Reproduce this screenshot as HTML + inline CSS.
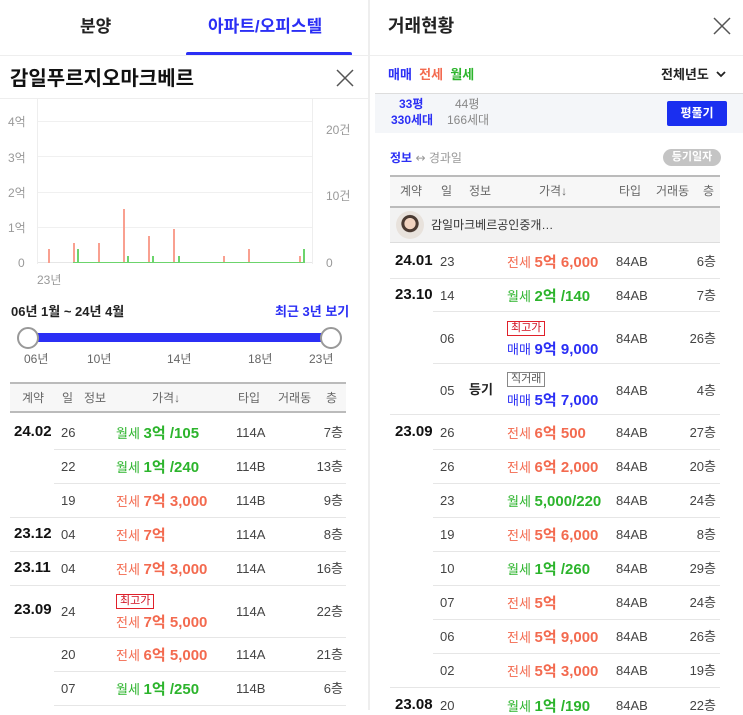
<!DOCTYPE html>
<html><head><meta charset="utf-8"><style>
*{margin:0;padding:0;box-sizing:border-box}
body{width:743px;height:710px;overflow:hidden;background:#fff;font-family:"Liberation Sans","Noto Sans CJK KR",sans-serif;color:#222;position:relative}
.a{position:absolute;white-space:nowrap;line-height:17px}
.a:has(> .v){margin-top:2px}
.ln{position:absolute;height:1px;background:#e6e6e6}
.b{color:#2b2ff5}.r{color:#f36a4f}.g{color:#2cb42c}
.m{font-weight:bold;font-size:15px;color:#111}
.d{font-size:13px;color:#444}
.k{font-size:13px}
.v{font-size:15px;font-weight:bold}
.t{font-size:13px;color:#444}
.f{font-size:13px;color:#444;text-align:right}
.tag{font-size:11px;border:1px solid #e0202a;color:#d01020;padding:0 3px;line-height:13px}
.tg{font-size:11px;border:1px solid #888;color:#555;padding:0 3px;line-height:13px}
.h{font-size:12px;color:#666}
</style></head><body>
<!-- Left panel -->
<div class="a" style="left:80px;top:18px;font-size:17px;font-weight:bold">분양</div>
<div class="a b" style="left:208px;top:18px;font-size:17px;font-weight:bold">아파트/오피스텔</div>
<div class="a" style="left:186px;top:52px;width:166px;height:4px;background:#2b2ff5;border-radius:2px"></div>
<div class="ln" style="left:0;top:55px;width:370px;background:#eee"></div>
<div class="a" style="left:10px;top:71px;font-size:20px;font-weight:bold;color:#111">감일푸르지오마크베르</div>
<svg class="a" style="left:335px;top:68px" width="20" height="20"><path d="M2 2L18 18M18 2L2 18" stroke="#555" stroke-width="1.5"/></svg>
<div class="ln" style="left:0;top:98px;width:370px;background:#eee"></div>
<!-- chart -->
<div class="a" style="left:37px;top:99px;width:1px;height:165px;background:#eee"></div>
<div class="a" style="left:312px;top:99px;width:1px;height:165px;background:#eee"></div>
<div class="ln" style="left:38px;top:121px;width:274px;background:#f0f0f0"></div>
<div class="ln" style="left:38px;top:156px;width:274px;background:#f0f0f0"></div>
<div class="ln" style="left:38px;top:192px;width:274px;background:#f0f0f0"></div>
<div class="ln" style="left:38px;top:227px;width:274px;background:#f0f0f0"></div>
<div class="ln" style="left:38px;top:262px;width:274px;background:#e6e6e6"></div>
<div class="a h" style="left:8px;top:114px;color:#999">4억</div>
<div class="a h" style="left:8px;top:150px;color:#999">3억</div>
<div class="a h" style="left:8px;top:185px;color:#999">2억</div>
<div class="a h" style="left:8px;top:220px;color:#999">1억</div>
<div class="a h" style="left:18px;top:255px;color:#999">0</div>
<div class="a h" style="left:326px;top:122px;color:#999">20건</div>
<div class="a h" style="left:326px;top:188px;color:#999">10건</div>
<div class="a h" style="left:326px;top:255px;color:#999">0</div>
<div class="a h" style="left:37px;top:272px;color:#999">23년</div>
<svg class="a" style="left:0;top:0" width="370" height="270">
<g fill="#f9a090">
<rect x="48" y="249" width="2" height="14"/><rect x="73" y="243" width="2" height="20"/><rect x="98" y="243" width="2" height="20"/><rect x="123" y="209" width="2" height="54"/><rect x="148" y="236" width="2" height="27"/><rect x="173" y="229" width="2" height="34"/><rect x="223" y="256" width="2" height="7"/><rect x="248" y="249" width="2" height="14"/><rect x="299" y="256" width="2" height="7"/></g>
<g fill="#6cd46c"><rect x="77" y="249" width="2" height="14"/><rect x="127" y="256" width="2" height="7"/><rect x="152" y="256" width="2" height="7"/><rect x="178" y="256" width="2" height="7"/><rect x="303" y="249" width="2" height="14"/><rect x="73" y="262" width="232" height="1"/></g>
</svg>
<div class="a" style="left:11px;top:303px;font-size:13px;font-weight:bold">06년 1월 ~ 24년 4월</div>
<div class="a b" style="left:275px;top:303px;font-size:13px;font-weight:bold">최근 3년 보기</div>
<div class="a" style="left:27px;top:333px;width:304px;height:9px;background:#2b2ff5"></div>
<div class="a" style="left:17px;top:327px;width:22px;height:22px;border-radius:50%;border:2px solid #999;background:#fff"></div>
<div class="a" style="left:320px;top:327px;width:22px;height:22px;border-radius:50%;border:2px solid #999;background:#fff"></div>
<div class="a h" style="left:24px;top:351px">06년</div><div class="a h" style="left:87px;top:351px">10년</div><div class="a h" style="left:167px;top:351px">14년</div><div class="a h" style="left:248px;top:351px">18년</div><div class="a h" style="left:309px;top:351px">23년</div>
<div class="a" style="left:10px;top:382px;width:336px;height:31px;background:#f7f7f7;border-top:2px solid #bbb;border-bottom:2px solid #bbb"></div>
<div class="a h" style="left:22px;top:390px">계약</div><div class="a h" style="left:62px;top:390px">일</div><div class="a h" style="left:84px;top:390px">정보</div><div class="a h" style="left:152px;top:390px">가격↓</div><div class="a h" style="left:238px;top:390px">타입</div><div class="a h" style="left:278px;top:390px">거래동</div><div class="a h" style="left:326px;top:390px">층</div>
<!-- left rows -->
<div class="a m" style="left:14px;top:423px">24.02</div><div class="a d" style="left:61px;top:424px">26</div><div class="a" style="left:116px;top:423px"><span class="k g">월세 </span><span class="v g">3억 /105</span></div><div class="a t" style="left:236px;top:424px">114A</div><div class="a f" style="left:300px;width:43px;top:424px">7층</div>
<div class="ln" style="left:54px;top:449px;width:292px"></div>
<div class="a d" style="left:61px;top:458px">22</div><div class="a" style="left:116px;top:457px"><span class="k g">월세 </span><span class="v g">1억 /240</span></div><div class="a t" style="left:236px;top:458px">114B</div><div class="a f" style="left:300px;width:43px;top:458px">13층</div>
<div class="ln" style="left:54px;top:483px;width:292px"></div>
<div class="a d" style="left:61px;top:492px">19</div><div class="a" style="left:116px;top:491px"><span class="k r">전세 </span><span class="v r">7억 3,000</span></div><div class="a t" style="left:236px;top:492px">114B</div><div class="a f" style="left:300px;width:43px;top:492px">9층</div>
<div class="ln" style="left:10px;top:517px;width:336px"></div>
<div class="a m" style="left:14px;top:525px">23.12</div><div class="a d" style="left:61px;top:526px">04</div><div class="a" style="left:116px;top:525px"><span class="k r">전세 </span><span class="v r">7억</span></div><div class="a t" style="left:236px;top:526px">114A</div><div class="a f" style="left:300px;width:43px;top:526px">8층</div>
<div class="ln" style="left:10px;top:551px;width:336px"></div>
<div class="a m" style="left:14px;top:559px">23.11</div><div class="a d" style="left:61px;top:560px">04</div><div class="a" style="left:116px;top:559px"><span class="k r">전세 </span><span class="v r">7억 3,000</span></div><div class="a t" style="left:236px;top:560px">114A</div><div class="a f" style="left:300px;width:43px;top:560px">16층</div>
<div class="ln" style="left:10px;top:585px;width:336px"></div>
<div class="a m" style="left:14px;top:601px">23.09</div><div class="a d" style="left:61px;top:603px">24</div><div class="a tag" style="left:116px;top:594px">최고가</div><div class="a" style="left:116px;top:612px"><span class="k r">전세 </span><span class="v r">7억 5,000</span></div><div class="a t" style="left:236px;top:603px">114A</div><div class="a f" style="left:300px;width:43px;top:603px">22층</div>
<div class="ln" style="left:10px;top:637px;width:336px"></div>
<div class="a d" style="left:61px;top:646px">20</div><div class="a" style="left:116px;top:645px"><span class="k r">전세 </span><span class="v r">6억 5,000</span></div><div class="a t" style="left:236px;top:646px">114A</div><div class="a f" style="left:300px;width:43px;top:646px">21층</div>
<div class="ln" style="left:54px;top:671px;width:292px"></div>
<div class="a d" style="left:61px;top:680px">07</div><div class="a" style="left:116px;top:679px"><span class="k g">월세 </span><span class="v g">1억 /250</span></div><div class="a t" style="left:236px;top:680px">114B</div><div class="a f" style="left:300px;width:43px;top:680px">6층</div>
<div class="ln" style="left:54px;top:705px;width:292px"></div>
<div class="a" style="left:368px;top:0;width:2px;height:710px;background:#eee"></div>
<!-- Right panel -->
<div class="a" style="left:388px;top:18px;font-size:18px;font-weight:bold;color:#222">거래현황</div>
<svg class="a" style="left:712px;top:16px" width="20" height="20"><path d="M2 2L18 18M18 2L2 18" stroke="#555" stroke-width="1.5"/></svg>
<div class="ln" style="left:370px;top:55px;width:373px;background:#eee"></div>
<div class="a" style="left:388px;top:66px;font-size:13px;font-weight:bold"><span class="b">매매</span> <span class="r">&nbsp;전세</span> <span class="g">&nbsp;월세</span></div>
<div class="a" style="left:661px;top:66px;font-size:13px;font-weight:bold">전체년도</div>
<svg class="a" style="left:716px;top:70px" width="10" height="8"><path d="M1 2L5 6L9 2" stroke="#222" stroke-width="1.8" fill="none"/></svg>
<div class="a" style="left:375px;top:93px;width:368px;height:40px;background:#f4f6f9;border-top:1px solid #ddd"></div>
<div class="a b" style="left:399px;top:97px;font-size:12px;font-weight:bold;line-height:15px">33평</div>
<div class="a b" style="left:391px;top:113px;font-size:12px;font-weight:bold;line-height:15px">330세대</div>
<div class="a" style="left:455px;top:97px;font-size:12px;color:#888;line-height:15px">44평</div>
<div class="a" style="left:447px;top:113px;font-size:12px;color:#888;line-height:15px">166세대</div>
<div class="a" style="left:667px;top:101px;width:60px;height:25px;background:#1a2ff0;border-radius:2px;color:#fff;font-size:12px;font-weight:bold;text-align:center;line-height:25px">평풀기</div>
<div class="a" style="left:390px;top:150px;font-size:12px;color:#999"><b class="b">정보</b> <span style="font-family:'DejaVu Sans',sans-serif">↔</span> 경과일</div>
<div class="a" style="left:663px;top:149px;width:58px;height:17px;border-radius:9px;background:#c4c4c4;color:#fff;font-size:11px;font-weight:bold;text-align:center;line-height:17px">등기일자</div>
<div class="a" style="left:390px;top:175px;width:330px;height:33px;background:#f7f7f7;border-top:2px solid #bbb;border-bottom:2px solid #bbb"></div>
<div class="a h" style="left:400px;top:183px">계약</div><div class="a h" style="left:441px;top:183px">일</div><div class="a h" style="left:469px;top:183px">정보</div><div class="a h" style="left:539px;top:183px">가격↓</div><div class="a h" style="left:619px;top:183px">타입</div><div class="a h" style="left:656px;top:183px">거래동</div><div class="a h" style="left:703px;top:183px">층</div>
<div class="a" style="left:390px;top:208px;width:330px;height:35px;background:#f2f2f2;border-bottom:1px solid #ddd"></div>
<div class="a" style="left:396px;top:211px;width:28px;height:28px;border-radius:50%;background:radial-gradient(circle at 50% 45%,#f1d3c0 0 26%,#4a3a32 28% 40%,#e8e2dc 43%)"></div>
<div class="a" style="left:431px;top:217px;font-size:12px;color:#333">감일마크베르공인중개…</div>
<!-- right rows -->
<div class="a m" style="left:395px;top:252px">24.01</div><div class="a d" style="left:440px;top:253px">23</div><div class="a" style="left:507px;top:252px"><span class="k r">전세 </span><span class="v r">5억 6,000</span></div><div class="a t" style="left:616px;top:253px">84AB</div><div class="a f" style="left:670px;width:46px;top:253px">6층</div>
<div class="ln" style="left:390px;top:278px;width:330px"></div>
<div class="a m" style="left:395px;top:286px">23.10</div><div class="a d" style="left:440px;top:287px">14</div><div class="a" style="left:507px;top:286px"><span class="k g">월세 </span><span class="v g">2억 /140</span></div><div class="a t" style="left:616px;top:287px">84AB</div><div class="a f" style="left:670px;width:46px;top:287px">7층</div>
<div class="ln" style="left:433px;top:311px;width:287px"></div>
<div class="a d" style="left:440px;top:330px">06</div><div class="a tag" style="left:507px;top:321px">최고가</div><div class="a" style="left:507px;top:339px"><span class="k b">매매 </span><span class="v b">9억 9,000</span></div><div class="a t" style="left:616px;top:330px">84AB</div><div class="a f" style="left:670px;width:46px;top:330px">26층</div>
<div class="ln" style="left:433px;top:363px;width:287px"></div>
<div class="a d" style="left:440px;top:382px">05</div><div class="a" style="left:469px;top:381px;font-size:13px;font-weight:bold">등기</div><div class="a tg" style="left:507px;top:372px">직거래</div><div class="a" style="left:507px;top:390px"><span class="k b">매매 </span><span class="v b">5억 7,000</span></div><div class="a t" style="left:616px;top:382px">84AB</div><div class="a f" style="left:670px;width:46px;top:382px">4층</div>
<div class="ln" style="left:390px;top:414px;width:330px"></div>
<div class="a m" style="left:395px;top:423px">23.09</div><div class="a d" style="left:440px;top:424px">26</div><div class="a" style="left:507px;top:423px"><span class="k r">전세 </span><span class="v r">6억 500</span></div><div class="a t" style="left:616px;top:424px">84AB</div><div class="a f" style="left:670px;width:46px;top:424px">27층</div>
<div class="ln" style="left:433px;top:449px;width:287px"></div>
<div class="a d" style="left:440px;top:458px">26</div><div class="a" style="left:507px;top:457px"><span class="k r">전세 </span><span class="v r">6억 2,000</span></div><div class="a t" style="left:616px;top:458px">84AB</div><div class="a f" style="left:670px;width:46px;top:458px">20층</div>
<div class="ln" style="left:433px;top:483px;width:287px"></div>
<div class="a d" style="left:440px;top:492px">23</div><div class="a" style="left:507px;top:491px"><span class="k g">월세 </span><span class="v g">5,000/220</span></div><div class="a t" style="left:616px;top:492px">84AB</div><div class="a f" style="left:670px;width:46px;top:492px">24층</div>
<div class="ln" style="left:433px;top:517px;width:287px"></div>
<div class="a d" style="left:440px;top:526px">19</div><div class="a" style="left:507px;top:525px"><span class="k r">전세 </span><span class="v r">5억 6,000</span></div><div class="a t" style="left:616px;top:526px">84AB</div><div class="a f" style="left:670px;width:46px;top:526px">8층</div>
<div class="ln" style="left:433px;top:551px;width:287px"></div>
<div class="a d" style="left:440px;top:560px">10</div><div class="a" style="left:507px;top:559px"><span class="k g">월세 </span><span class="v g">1억 /260</span></div><div class="a t" style="left:616px;top:560px">84AB</div><div class="a f" style="left:670px;width:46px;top:560px">29층</div>
<div class="ln" style="left:433px;top:585px;width:287px"></div>
<div class="a d" style="left:440px;top:594px">07</div><div class="a" style="left:507px;top:593px"><span class="k r">전세 </span><span class="v r">5억</span></div><div class="a t" style="left:616px;top:594px">84AB</div><div class="a f" style="left:670px;width:46px;top:594px">24층</div>
<div class="ln" style="left:433px;top:619px;width:287px"></div>
<div class="a d" style="left:440px;top:628px">06</div><div class="a" style="left:507px;top:627px"><span class="k r">전세 </span><span class="v r">5억 9,000</span></div><div class="a t" style="left:616px;top:628px">84AB</div><div class="a f" style="left:670px;width:46px;top:628px">26층</div>
<div class="ln" style="left:433px;top:653px;width:287px"></div>
<div class="a d" style="left:440px;top:662px">02</div><div class="a" style="left:507px;top:661px"><span class="k r">전세 </span><span class="v r">5억 3,000</span></div><div class="a t" style="left:616px;top:662px">84AB</div><div class="a f" style="left:670px;width:46px;top:662px">19층</div>
<div class="ln" style="left:390px;top:687px;width:330px"></div>
<div class="a m" style="left:395px;top:696px">23.08</div><div class="a d" style="left:440px;top:697px">20</div><div class="a" style="left:507px;top:696px"><span class="k g">월세 </span><span class="v g">1억 /190</span></div><div class="a t" style="left:616px;top:697px">84AB</div><div class="a f" style="left:670px;width:46px;top:697px">22층</div>
</body></html>
